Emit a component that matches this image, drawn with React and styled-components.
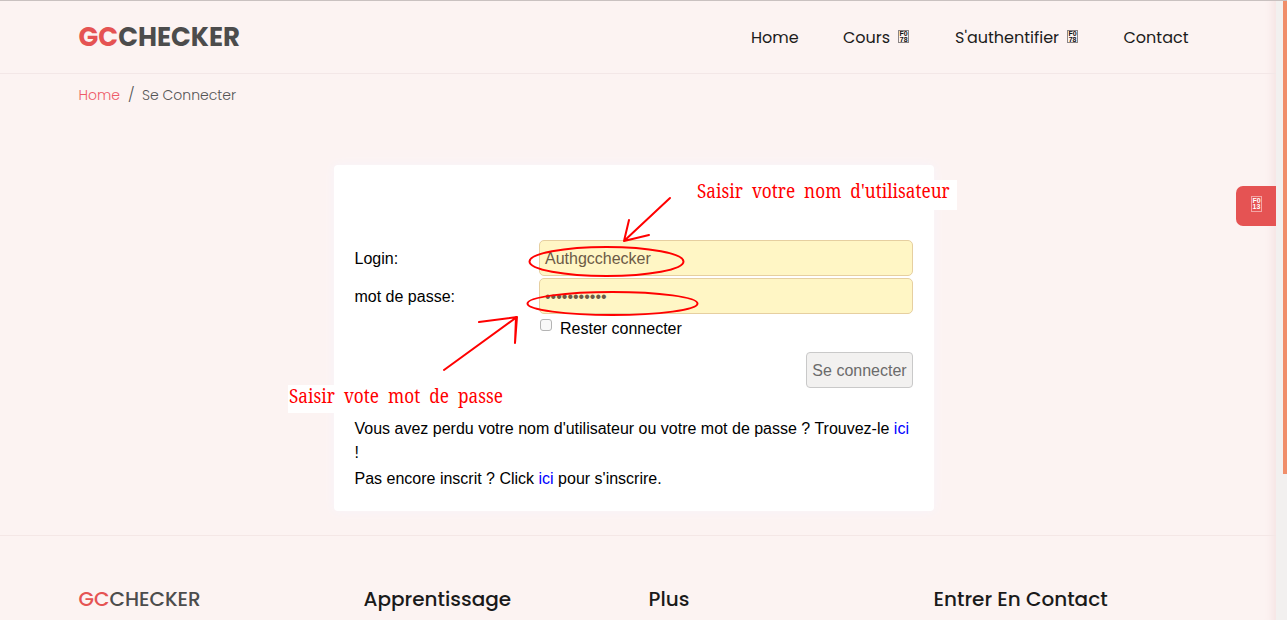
import React from "react";
import styled, { createGlobalStyle } from "styled-components";

const GlobalStyle = createGlobalStyle`
  * { box-sizing: border-box; }
  body { margin: 0; overflow: hidden; background: #fcf3f2; }
  a { text-decoration: none; }
`;

const geometric = `Poppins, Inter, "Open Sans", sans-serif`;

const Window = styled.div`
  position: relative;
  display: flex;
  width: 1287px;
  height: 620px;
  overflow: hidden;
  border-top: 1px solid #c9c1c0;
  background: #fcf3f2;
  font-family: "Liberation Sans", Arial, sans-serif;
  font-size: 16px;
  color: #000;
`;

const Page = styled.div`
  flex: 1;
  display: flex;
  flex-direction: column;
  min-width: 0;
  box-shadow: inset -11px 0 9px -8px #f5e2e2;
`;

const ScrollTrack = styled.div`
  width: 11px;
  background: #f2f0ef;
  display: flex;
  justify-content: flex-end;
`;

const ScrollThumb = styled.div`
  width: 4px;
  height: 473px;
  background: #f08e6a;
`;

const Header = styled.header`
  display: flex;
  justify-content: space-between;
  align-items: center;
  height: 73px;
  flex: none;
  padding: 0 87px 0 78.5px;
  border-bottom: 1px solid #f3e7e7;
  font-family: ${geometric};
`;

const Brand = styled.div`
  font-family: ${geometric};
  font-size: ${(p) => p.$size}px;
  font-weight: ${(p) => p.$weight};
  line-height: 30px;
  color: #4c4c4c;
  span { color: #e55353; }
`;

const Nav = styled.nav`
  display: flex;
  gap: 44px;
`;

const NavItem = styled.a`
  display: flex;
  align-items: center;
  gap: 8px;
  width: ${(p) => p.$width}px;
  padding-top: 2px;
  white-space: nowrap;
  font-size: 16px;
  line-height: 24px;
  color: #1c1c1c;
`;

const CodeBox = styled.span`
  display: flex;
  flex-direction: column;
  justify-content: center;
  align-items: center;
  width: 11px;
  height: ${(p) => p.$height || 13}px;
  margin-top: ${(p) => p.$lift || 0}px;
  border: 1px solid ${(p) => p.$edge || "#8b8585"};
  font: bold 7px/6px "Liberation Sans", sans-serif;
  color: ${(p) => p.$ink || "#111"};
`;

const Breadcrumb = styled.div`
  display: flex;
  height: 42px;
  flex: none;
  padding-left: 78.5px;
  align-items: center;
  font: 300 14px/20px ${geometric};
`;

const Crumb = styled.a`
  width: ${(p) => p.$width}px;
  color: ${(p) => p.$color || "#555"};
  font-size: ${(p) => p.$size || 14}px;
`;

const Main = styled.main`
  display: flex;
  justify-content: center;
  height: 420px;
  flex: none;
  padding: 49px 8px 0 0;
  border-bottom: 1px solid #f4e7e6;
`;

const Card = styled.form`
  width: 600px;
  height: 346px;
  padding: 75px 21px 0 20px;
  border-radius: 4px;
  background: #fff;
  box-shadow: 0 0 10px 1px #f8f4f9;
`;

const Field = styled.label`
  display: flex;
  justify-content: space-between;
  height: 36px;
  margin-bottom: 2px;
  padding-left: 0.5px;
  line-height: 37px;
`;

const Input = styled.span`
  width: 374px;
  height: 36px;
  padding: 0 5px;
  border: 1px solid #e6cfa0;
  border-radius: 5px;
  background: #fff6c5;
  line-height: 36px;
  color: #6c5a45;
`;

const Remember = styled.label`
  display: flex;
  gap: 8px;
  height: 36px;
  padding: 3px 0 0 186px;
  line-height: 19px;
`;

const Checkbox = styled.span`
  width: 12px;
  height: 12px;
  border: 1px solid #b4b4b4;
  border-radius: 3px;
  background: #f8f8f8;
`;

const Actions = styled.div`
  display: flex;
  justify-content: flex-end;
  height: 65px;
`;

const Button = styled.button`
  width: 107px;
  height: 36px;
  padding: 2px 0 0;
  border: 1px solid #c9c9c9;
  border-radius: 4px;
  background: #f2f1f0;
  font: 16px "Liberation Sans", Arial, sans-serif;
  color: #6b6b6b;
`;

const Note = styled.p`
  margin: 0 0 2px;
  padding-left: 0.5px;
  line-height: 24px;
  a { color: #00f; }
`;

const Footer = styled.footer`
  display: grid;
  grid-template-columns: repeat(4, 285px);
  padding: 48px 0 0 78.5px;
`;

const FooterTitle = styled.h3`
  margin: 0;
  font: 500 20px/30px ${geometric};
  color: #1a1a1a;
  white-space: nowrap;
`;

const SettingsTab = styled.div`
  position: absolute;
  left: 1236px;
  top: 185px;
  width: 40px;
  height: 40px;
  display: flex;
  align-items: center;
  justify-content: center;
  padding: 0 0 4px 1px;
  border-radius: 7px 0 0 7px;
  background: #e55353;
`;

const Annotation = styled.div`
  position: absolute;
  left: ${(p) => p.$x}px;
  top: ${(p) => p.$y}px;
  width: ${(p) => p.$w}px;
  height: ${(p) => p.$h}px;
  padding-left: 1px;
  background: #fff;
  font: 19px/23px "Noto Serif", "Liberation Serif", serif;
  word-spacing: 5px;
  white-space: nowrap;
  color: #f00;
  span {
    display: inline-block;
    transform: scaleX(0.905);
    transform-origin: 0 0;
  }
`;

const Marks = styled.svg`
  position: absolute;
  left: 0;
  top: -1px;
  pointer-events: none;
`;

const Code = ({ top, bottom, ...rest }) => (
  <CodeBox {...rest}>
    <span>{top}</span>
    <span>{bottom}</span>
  </CodeBox>
);

export default function App() {
  return (
    <>
      <GlobalStyle />
      <Window>
        <Page>
          <Header>
            <Brand $size={26} $weight={700}><span>GC</span>CHECKER</Brand>
            <Nav>
              <NavItem $width={48}>Home</NavItem>
              <NavItem $width={68}>Cours <Code $lift={-3} top="F0" bottom="78" /></NavItem>
              <NavItem $width={124.5}>S'authentifier <Code $lift={-3} top="F0" bottom="78" /></NavItem>
              <NavItem $width={65.5}>Contact</NavItem>
            </Nav>
          </Header>
          <Breadcrumb>
            <Crumb $width={49.5} $color="#ee5a68">Home</Crumb>
            <Crumb $width={14} $size={15}>/</Crumb>
            <Crumb $width={120}>Se Connecter</Crumb>
          </Breadcrumb>
          <Main>
            <Card>
              <Field>Login:<Input>Authgcchecker</Input></Field>
              <Field>mot de passe:<Input>•••••••••••</Input></Field>
              <Remember><Checkbox />Rester connecter</Remember>
              <Actions><Button type="button">Se connecter</Button></Actions>
              <Note>Vous avez perdu votre nom d'utilisateur ou votre mot de passe ? Trouvez-le <a href="#">ici</a> !</Note>
              <Note>Pas encore inscrit ? Click <a href="#">ici</a> pour s'inscrire.</Note>
            </Card>
          </Main>
          <Footer>
            <Brand $size={20} $weight={500}><span>GC</span>CHECKER</Brand>
            <FooterTitle>Apprentissage</FooterTitle>
            <FooterTitle>Plus</FooterTitle>
            <FooterTitle>Entrer En Contact</FooterTitle>
          </Footer>
        </Page>
        <ScrollTrack><ScrollThumb /></ScrollTrack>
        <SettingsTab><Code top="F0" bottom="13" $height={16} $edge="#f3a5a5" $ink="#fff" /></SettingsTab>
        <Annotation $x={696} $y={179} $w={261} $h={30}><span>Saisir votre nom d'utilisateur</span></Annotation>
        <Annotation $x={288} $y={384} $w={218} $h={28}><span>Saisir vote mot de passe</span></Annotation>
        <Marks width="1287" height="620" fill="none" stroke="#f00" strokeWidth="2" strokeLinecap="round" strokeLinejoin="round">
          <ellipse cx="606.5" cy="261.5" rx="77" ry="14.5" />
          <ellipse cx="612.5" cy="303.5" rx="85" ry="11.5" />
          <path d="M670 198L624 241M629 220L624 241L649 235" />
          <path d="M444 370L517 317M479 322L517 317L515 343L516 317" />
        </Marks>
      </Window>
    </>
  );
}
